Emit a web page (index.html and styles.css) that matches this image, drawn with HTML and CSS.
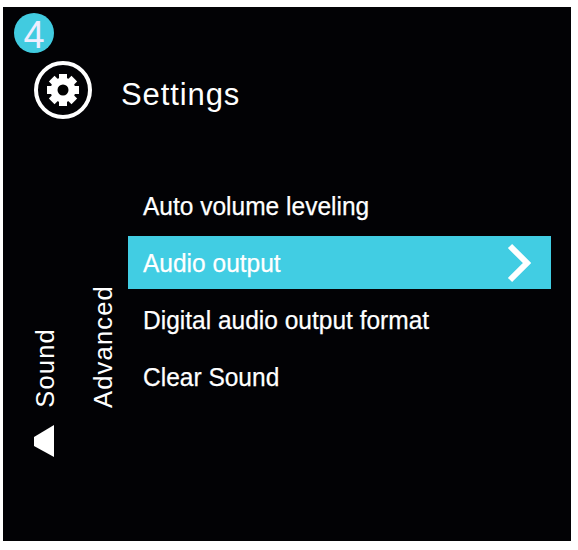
FILE: index.html
```html
<!DOCTYPE html>
<html lang="en">
<head>
    <meta charset="UTF-8">
    <title>Settings</title>
    <link rel="stylesheet" href="styles.css">
</head>
<body>
    <div class="panel">
        <div class="step-badge">4</div>
        <div class="title-row">
            <svg class="gear-icon" width="58" height="58" viewBox="0 0 58 58">
                <circle cx="29" cy="29" r="27" fill="none" stroke="#fff" stroke-width="4"/>
                <g fill="#fff">
                    <circle cx="29" cy="29" r="12.5"/>
                    <rect x="25" y="13" width="8" height="32"/>
                    <rect x="25" y="13" width="8" height="32" transform="rotate(45 29 29)"/>
                    <rect x="25" y="13" width="8" height="32" transform="rotate(90 29 29)"/>
                    <rect x="25" y="13" width="8" height="32" transform="rotate(135 29 29)"/>
                </g>
                <circle cx="29" cy="29" r="5.5" fill="#000"/>
            </svg>
            <div class="title">Settings</div>
        </div>
        <div class="content">
            <div class="side-col">
                <div class="side-label">Sound</div>
                <svg class="speaker-icon" width="20" height="32" viewBox="0 0 20 32">
                    <polygon points="0,12 20,0 20,32 0,21" fill="#fff"/>
                </svg>
            </div>
            <div class="side-label advanced">Advanced</div>
            <ul class="menu">
                <li class="menu-item"><span class="menu-text">Auto volume leveling</span></li>
                <li class="menu-item active">
                    <span class="menu-text">Audio output</span>
                    <svg class="chevron" width="24" height="40" viewBox="0 0 24 40">
                        <polyline points="3,3 20,20 3,37" fill="none" stroke="#fff" stroke-width="6"/>
                    </svg>
                </li>
                <li class="menu-item"><span class="menu-text">Digital audio output format</span></li>
                <li class="menu-item"><span class="menu-text">Clear Sound</span></li>
            </ul>
        </div>
    </div>
</body>
</html>
```

FILE: styles.css
```css
body {
    margin: 0;
    background: #fff;
    font-family: "Liberation Sans", Arial, sans-serif;
    color: #fff;
}
.panel {
    box-sizing: border-box;
    width: 568px;
    height: 534px;
    margin: 7px 0 0 3px;
    padding: 6px 0 0 11px;
    background: #020205;
}
.step-badge {
    width: 40px;
    height: 40px;
    border-radius: 50%;
    background: #41cbe0;
    font-size: 38px;
    line-height: 44px;
    text-align: center;
    color: #eef;
}
.title-row {
    display: flex;
    align-items: center;
    gap: 29px;
    margin: 8px 0 0 20px;
}
.gear-icon {
    display: block;
}
.title {
    padding-top: 9px;
    font-size: 31px;
    letter-spacing: 0.9px;
}
.content {
    display: flex;
    margin-top: 60px;
}
.side-col {
    display: flex;
    flex-direction: column;
    align-items: center;
    justify-content: flex-end;
    gap: 17px;
    width: 22px;
    margin-left: 20px;
}
.side-label {
    writing-mode: vertical-rl;
    transform: rotate(180deg);
    font-size: 25.5px;
    line-height: 22px;
    letter-spacing: 1.2px;
    white-space: nowrap;
}
.advanced {
    align-self: flex-end;
    margin: 0 0 49px 36px;
}
.speaker-icon {
    display: block;
    margin-left: -2px;
}
.menu {
    list-style: none;
    width: 423px;
    margin: 0 0 0 14px;
    padding: 0 0 54px;
    display: flex;
    flex-direction: column;
    gap: 4px;
}
.menu-item {
    display: flex;
    align-items: center;
    justify-content: space-between;
    height: 53px;
    padding: 0 20px 0 15px;
    font-size: 26.5px;
}
.menu-text {
    display: inline-block;
    margin-top: 2px;
    transform: scaleX(0.925);
    transform-origin: left center;
    white-space: nowrap;
    -webkit-text-stroke: 0.25px #fff;
}
.active {
    background: #41cde3;
}
.chevron {
    display: block;
}
```
